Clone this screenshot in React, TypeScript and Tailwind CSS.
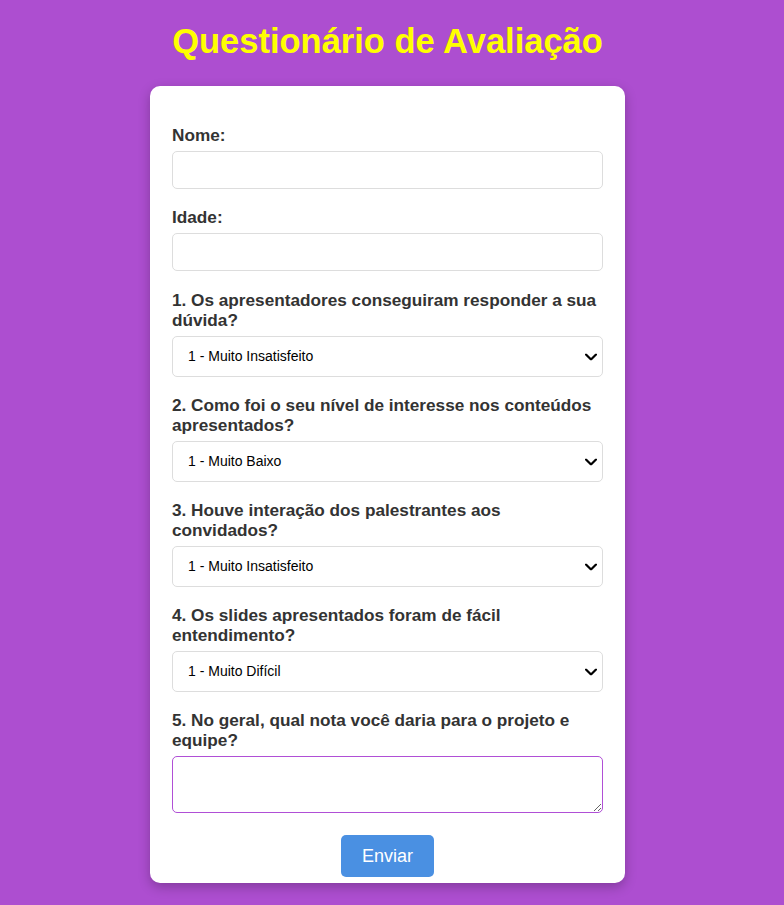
const QUESTIONS = [
  { label: "1. Os apresentadores conseguiram responder a sua dúvida?", option: "1 - Muito Insatisfeito" },
  { label: "2. Como foi o seu nível de interesse nos conteúdos apresentados?", option: "1 - Muito Baixo" },
  { label: "3. Houve interação dos palestrantes aos convidados?", option: "1 - Muito Insatisfeito" },
  { label: "4. Os slides apresentados foram de fácil entendimento?", option: "1 - Muito Difícil" },
];

function Chevron() {
  return (
    <svg viewBox="0 0 12 7" className="pointer-events-none absolute right-[6px] top-1/2 h-[7px] w-[12px] -translate-y-1/2" aria-hidden>
      <polyline points="1,1 6,6 11,1" fill="none" stroke="#000" strokeWidth="2.2" strokeLinecap="round" strokeLinejoin="round" />
    </svg>
  );
}

export default function App() {
  return (
    <div className="flex min-h-screen flex-col items-center bg-[#ad4ed0] pr-[9px] pt-[22px] font-['Liberation_Sans',Arial,sans-serif]">
      <h1 className="mb-[25px] text-[34.5px] font-bold leading-[39px] text-[#ffff00]">
        Questionário de Avaliação
      </h1>

      <form
        className="flex w-[475px] flex-col rounded-[10px] bg-white px-[22px] pb-[6px] pt-[38px] shadow-[0_4px_12px_rgba(0,0,0,0.25)]"
        onSubmit={(e) => e.preventDefault()}
      >
        <label className="mb-[6px] pt-[1px] text-[17.2px] font-bold leading-[20px] text-[#333]">Nome:</label>
        <input type="text" className="h-[38px] rounded-[5px] border border-[#dddddd] px-[10px] text-[14px] outline-none" />

        <label className="mb-[6px] mt-[18px] text-[17.2px] font-bold leading-[20px] text-[#333]">Idade:</label>
        <input type="text" className="h-[38px] rounded-[5px] border border-[#dddddd] px-[10px] text-[14px] outline-none" />

        {QUESTIONS.map(({ label, option }, i) => (
          <div key={label} className={i === 0 ? "mt-[19px] flex flex-col" : "mt-[18px] flex flex-col"}>
            <label className="mb-[6px] text-[17.2px] font-bold leading-[20px] text-[#333]">{label}</label>
            <div className="relative">
              <select className="h-[41px] w-full appearance-none rounded-[5px] border border-[#dddddd] bg-white pl-[15px] text-[14px] text-black outline-none">
                <option>{option}</option>
              </select>
              <Chevron />
            </div>
          </div>
        ))}

        <label className="mb-[6px] mt-[18px] text-[17.2px] font-bold leading-[20px] text-[#333]">
          5. No geral, qual nota você daria para o projeto e equipe?
        </label>
        <textarea className="h-[57px] rounded-[5px] border border-solid border-[#b04fd6] p-[10px] text-[14px] outline-none" />

        <button
          type="submit"
          className="mx-auto mt-[22px] h-[42px] w-[93px] rounded-[5px] bg-[#4a90e2] text-[18px] text-white"
        >
          Enviar
        </button>
      </form>
    </div>
  );
}
